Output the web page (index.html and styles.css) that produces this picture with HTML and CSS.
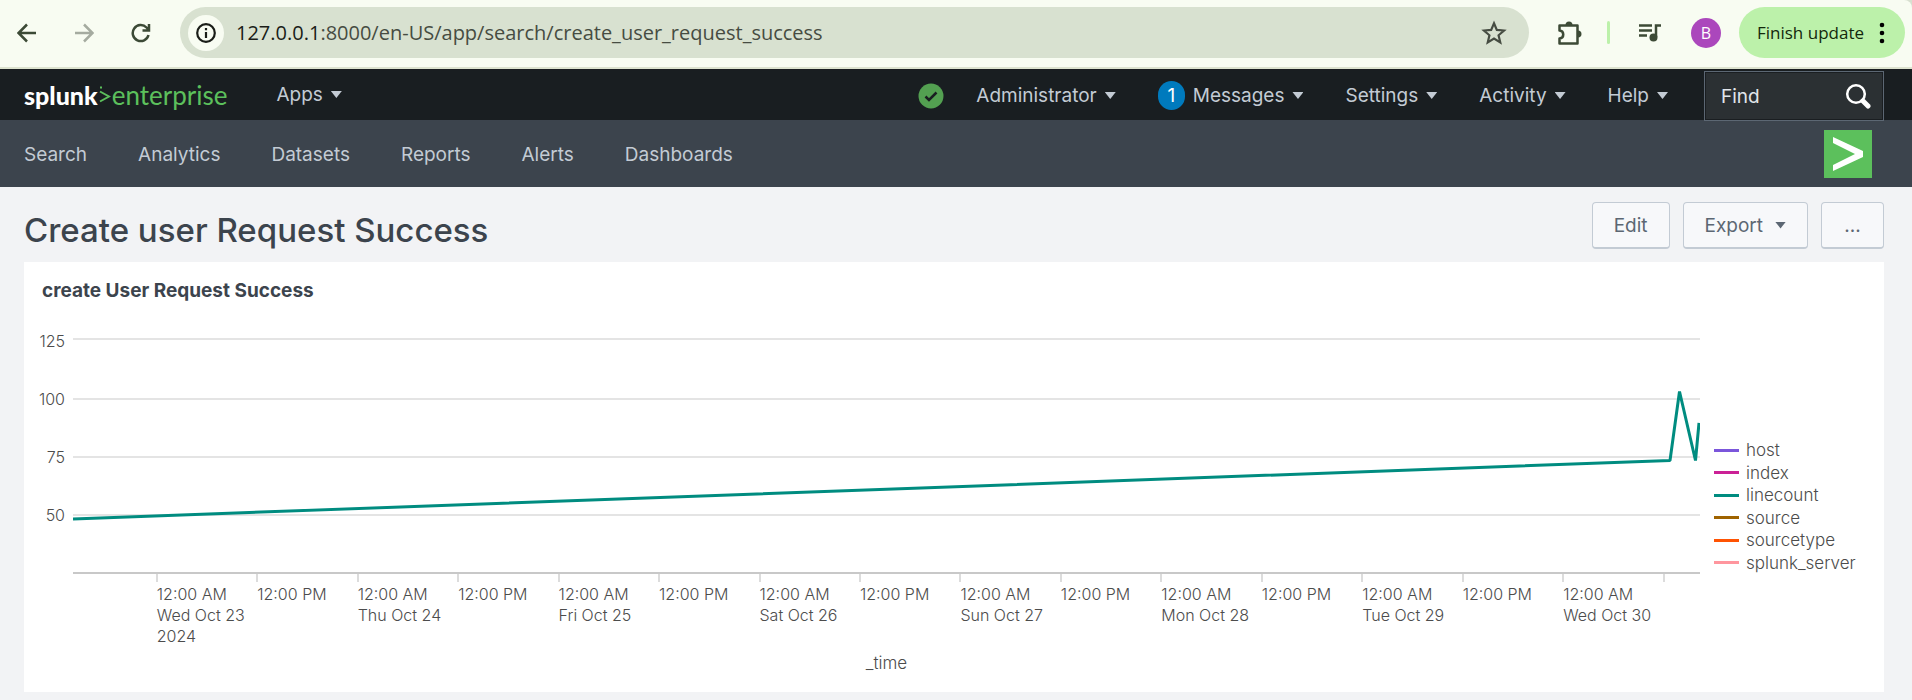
FILE: index.html
```html
<!DOCTYPE html>
<html lang="en">
<head>
<meta charset="utf-8">
<title>Create user Request Success | Splunk</title>
<link rel="stylesheet" href="styles.css">
</head>
<body>
<header class="browser">
  <div class="browser-bar">
    <div class="browser-nav">
      <button class="icon-btn" aria-label="Back"><svg width="20" height="20" viewBox="0 0 20 20"><path d="M19 10H2M10 1.500L1.500 10L10 18.500"/></svg></button>
      <button class="icon-btn muted" aria-label="Forward"><svg width="20" height="20" viewBox="0 0 20 20"><path d="M1 10H18M10 1.500L18.500 10L10 18.500"/></svg></button>
      <button class="icon-btn" aria-label="Reload"><svg width="20" height="20" viewBox="0 0 20 20"><path d="M17.500 12A8 8 0 1 1 15.500 4.500L18 7M18 1V7.500H11.500"/></svg></button>
    </div>
    <div class="omnibox">
      <button class="site-info" aria-label="Site information"><svg width="20" height="20" viewBox="0 0 20 20"><circle cx="10" cy="10" r="8.800"/><path d="M10 9V15M10 5V7.200"/></svg></button>
      <div class="url"><span class="host">127.0.0.1</span>:8000/en-US/app/search/create_user_request_success</div>
      <button class="icon-btn star" aria-label="Bookmark"><svg width="26" height="26" viewBox="0 0 24 24"><path d="M12 3L14.600 9.100L21.300 9.700L16.200 14.100L17.800 20.700L12 17.200L6.200 20.700L7.800 14.100L2.700 9.700L9.400 9.100Z"/></svg></button>
    </div>
    <button class="icon-btn" aria-label="Extensions"><svg width="26" height="26" viewBox="0 0 26 26"><path d="M2.500 5.500H20.500V23.500H2.500V18.500C7.500 18 7.500 11 2.500 10.500Z" stroke-linejoin="round"/><path class="solid" d="M8.500 5A3.500 3.500 0 0 1 15.500 5ZM21 10.500A3.500 3.500 0 0 1 21 17.500Z"/></svg></button>
    <span class="divider"></span>
    <button class="icon-btn media" aria-label="Media controls"><svg width="24" height="20" viewBox="0 0 24 20"><path d="M1 2.500H14M1 7.500H14M1 12.500H9M23 2.500H18V14"/><circle class="solid" cx="15.500" cy="14.500" r="4"/></svg></button>
    <button class="avatar" aria-label="Profile">B</button>
    <button class="update">Finish update<svg width="6" height="22" viewBox="0 0 6 22"><circle cx="3" cy="3" r="2.300"/><circle cx="3" cy="11" r="2.300"/><circle cx="3" cy="19" r="2.300"/></svg></button>
  </div>
</header>

<nav class="topbar">
  <a class="logo" href="#"><span class="logo-name">splunk</span><svg width="12" height="18" viewBox="0 0 12 18"><path d="M1 5.500L10 10.500L1 15.500M1 1.500H3" /></svg><span class="logo-product">enterprise</span></a>
  <button class="menu">Apps<i class="caret"></i></button>
  <div class="topbar-right">
    <svg class="health" width="26" height="26" viewBox="0 0 26 26"><circle cx="13" cy="13" r="12.500"/><path d="M7.500 13.500L11 17L18.500 9.500"/></svg>
    <button class="menu">Administrator<i class="caret"></i></button>
    <button class="menu"><span class="badge">1</span>Messages<i class="caret"></i></button>
    <button class="menu">Settings<i class="caret"></i></button>
    <button class="menu">Activity<i class="caret"></i></button>
    <button class="menu">Help<i class="caret"></i></button>
    <label class="find"><input type="text" placeholder="Find" aria-label="Find"><svg width="26" height="26" viewBox="0 0 26 26"><circle cx="11" cy="11" r="8.800"/><path class="handle" d="M18 18L23 23"/></svg></label>
  </div>
</nav>

<nav class="appbar">
  <a href="#">Search</a><a href="#">Analytics</a><a href="#">Datasets</a><a href="#">Reports</a><a href="#">Alerts</a><a href="#">Dashboards</a>
  <svg class="app-icon" width="48" height="48" viewBox="0 0 48 48"><path d="M0 0H48V48H0Z" fill="#5cc05c"/><path d="M9 7L39 21V27L9 41V35L31 24L9 13Z" fill="#fff"/></svg>
</nav>

<main class="page">
  <div class="page-head">
    <h1>Create user Request Success</h1>
    <div class="actions">
      <button class="btn">Edit</button>
      <button class="btn">Export<i class="caret"></i></button>
      <button class="btn">...</button>
    </div>
  </div>
  <section class="panel">
    <h2>create User Request Success</h2>
    <div class="chart">
      <div class="y-axis"><span>125</span><span>100</span><span>75</span><span>50</span></div>
      <svg class="plot" viewBox="0 0 1627 236" preserveAspectRatio="none">
        <path class="grid" d="M0 1H1627M0 61H1627M0 119H1627M0 177H1627"/>
        <path class="axis" d="M0 235H1627"/>
        <path class="series" d="M0 181L1597 122.500L1606.500 53.500L1622.500 122.500L1626 85"/>
      </svg>
      <ul class="legend">
        <li><i class="key host-key"></i>host</li>
        <li><i class="key index-key"></i>index</li>
        <li><i class="key linecount-key"></i>linecount</li>
        <li><i class="key source-key"></i>source</li>
        <li><i class="key sourcetype-key"></i>sourcetype</li>
        <li><i class="key server-key"></i>splunk_server</li>
      </ul>
      <div class="x-axis">
        <span>12:00 AM<br>Wed Oct 23<br>2024</span><span>12:00 PM</span>
        <span>12:00 AM<br>Thu Oct 24</span><span>12:00 PM</span>
        <span>12:00 AM<br>Fri Oct 25</span><span>12:00 PM</span>
        <span>12:00 AM<br>Sat Oct 26</span><span>12:00 PM</span>
        <span>12:00 AM<br>Sun Oct 27</span><span>12:00 PM</span>
        <span>12:00 AM<br>Mon Oct 28</span><span>12:00 PM</span>
        <span>12:00 AM<br>Tue Oct 29</span><span>12:00 PM</span>
        <span>12:00 AM<br>Wed Oct 30</span><span></span>
      </div>
      <div class="x-title">_time</div>
    </div>
  </section>
</main>
</body>
</html>
```
FILE: styles.css
```css
* { box-sizing: border-box; }
body { margin: 0; background: #f2f3f5; color: #3c444d; font-family: Inter, "Liberation Sans", sans-serif; font-size: 19px; }
button { padding: 0; border: 0; background: none; color: inherit; font: inherit; cursor: pointer; }
a { color: inherit; text-decoration: none; }
svg { display: block; flex: none; }

.browser { background: #d8e0d0; border-bottom: 2px solid #dde3cf; font-family: "Open Sans", "Noto Sans", sans-serif; }
.browser-bar { display: flex; align-items: center; height: 67px; padding: 0 7px 2px 17px; background: #f8fcf2; border-top-right-radius: 8px; }
.browser-nav { display: flex; gap: 37px; margin-right: 29px; }
.icon-btn svg { fill: none; stroke: #3c4a36; stroke-width: 2.5px; }
.icon-btn.muted svg { stroke: #a5aba0; }
.icon-btn .solid { fill: #3c4a36; stroke: none; }
.omnibox { display: flex; flex: 1; align-items: center; height: 51px; margin-right: 28px; padding: 0 22px 0 8px; border-radius: 26px; background: #d8e1d0; }
.site-info { display: grid; place-items: center; width: 36px; height: 36px; border-radius: 50%; background: #f8fcf2; }
.site-info svg { fill: none; stroke: #1a1d18; stroke-width: 2.2px; }
.url { flex: 1; margin-left: 12px; color: #464c42; font-size: 20px; white-space: nowrap; }
.host { color: #1a1d18; }
.icon-btn.star svg { stroke: #464c42; stroke-width: 2px; }
.divider { width: 3px; height: 23px; margin: 0 28px 0 24px; border-radius: 2px; background: #bcf1aa; }
.avatar { width: 30px; height: 30px; margin: 0 18px 0 29px; border-radius: 50%; background: #ab47bc; color: #fff; font-size: 16px; }
.update { display: flex; align-items: center; gap: 15px; height: 51px; padding: 0 20px 0 18px; border-radius: 26px; background: #bcf1aa; color: #13280c; font-size: 17px; }

.topbar { display: flex; align-items: center; height: 51px; padding: 0 28px 0 24px; background: #191e21; color: #c3cbd4; }
.logo { display: flex; align-items: center; color: #5cc05c; font-family: Lato, sans-serif; font-size: 26px; line-height: 32px; }
.logo svg { margin: 0 1px; fill: none; stroke: #5cc05c; stroke-width: 2px; }
.logo-name { color: #fff; font-weight: 900; }
.logo-name { font-size: 25px; }
.menu { display: flex; align-items: center; white-space: nowrap; }
.logo + .menu { margin-left: 49px; }
.caret { width: 11px; height: 7px; margin-left: 8px; background: currentColor; clip-path: polygon(0 0, 100% 0, 50% 100%); }
.topbar-right { display: flex; align-items: center; gap: 42px; margin-left: auto; }
.health { margin-right: -10px; }
.health circle { fill: #53a051; }
.health path { fill: none; stroke: #1a1e21; stroke-width: 2.5px; }
.badge { width: 27px; height: 29px; margin-right: 8px; border-radius: 14px; background: #007abd; color: #fff; line-height: 29px; }
.find { display: flex; align-items: center; width: 180px; height: 50px; margin-left: -6px; padding-right: 12px; border: 1px solid #5c6773; background: #2b3033; box-shadow: inset 0 0 0 1px #1a1e21; }
.find input { flex: 1; min-width: 0; padding: 0 0 0 16px; border: 0; outline: 0; background: none; color: #e1e6eb; font: inherit; }
.find input::placeholder { color: #e1e6eb; opacity: 1; }
.find svg { fill: none; stroke: #fff; stroke-width: 2.5px; }
.find .handle { stroke-width: 5px; stroke-linecap: round; }
.topbar-right { padding-top: 2px; }
.topbar-right .find { margin-bottom: -1px; }

.appbar { display: flex; align-items: center; gap: 51px; height: 67px; padding: 1px 40px 0 24px; background: #3c444d; color: #c3cbd4; }
.app-icon { margin-left: auto; }

.page { padding: 15px 28px 8px 24px; }
.page-head { display: flex; justify-content: space-between; height: 60px; }
h1 { margin: 0; font-size: 33px; font-weight: 500; line-height: 56px; }
.actions { display: flex; gap: 13px; }
.btn { display: flex; align-items: center; justify-content: center; min-width: 63px; height: 47px; padding: 0 21px; border: 1px solid #c3cbd4; border-bottom-width: 2px; border-radius: 4px; background: #f7f8fa; color: #5c6773; }
.btn .caret { margin-left: 12px; }

.panel { padding: 17px 24px 18px 0; background: #fff; }
h2 { margin: 0 0 35px 18px; font-size: 19px; font-weight: 700; line-height: 24px; }
.chart { display: grid; grid-template-columns: 49px 1fr 160px; color: #4c4c4c; font-weight: 300; }
.y-axis { display: grid; grid-auto-rows: 58px; margin-top: -8px; padding-right: 8px; text-align: right; font-size: 16px; line-height: 22px; }
.plot { width: 100%; height: 236px; fill: none; }
.plot path { vector-effect: non-scaling-stroke; }
.grid { stroke: #e4e4e4; stroke-width: 2px; }
.axis { stroke: #c8c8c8; stroke-width: 2px; }
.series { stroke: #008c80; stroke-width: 3px; stroke-linejoin: bevel; }
.legend { display: grid; grid-auto-rows: 1fr; align-self: end; height: 135px; margin: 0; padding: 0 0 0 14px; list-style: none; font-size: 17px; line-height: 22px; }
.legend li { display: flex; align-items: center; gap: 7px; }
.key { width: 25px; height: 3px; }
.host-key { background: #7b56db; }
.index-key { background: #cb2196; }
.linecount-key { background: #008c80; }
.source-key { background: #9f6300; }
.sourcetype-key { background: #ff5303; }
.server-key { background: #ff969e; }
.x-axis { display: grid; grid-column: 2; grid-template-columns: 5.15% repeat(16, 6.175%); height: 78px; font-size: 16px; line-height: 21px; white-space: nowrap; }
.x-axis span:first-child { grid-column: 2; }
.x-axis span::before { content: ""; display: block; width: 2px; height: 8px; margin: 0 0 2px -1px; background: #dcdcdc; }
.x-title { grid-column: 2; text-align: center; font-size: 17px; line-height: 22px; }
```
